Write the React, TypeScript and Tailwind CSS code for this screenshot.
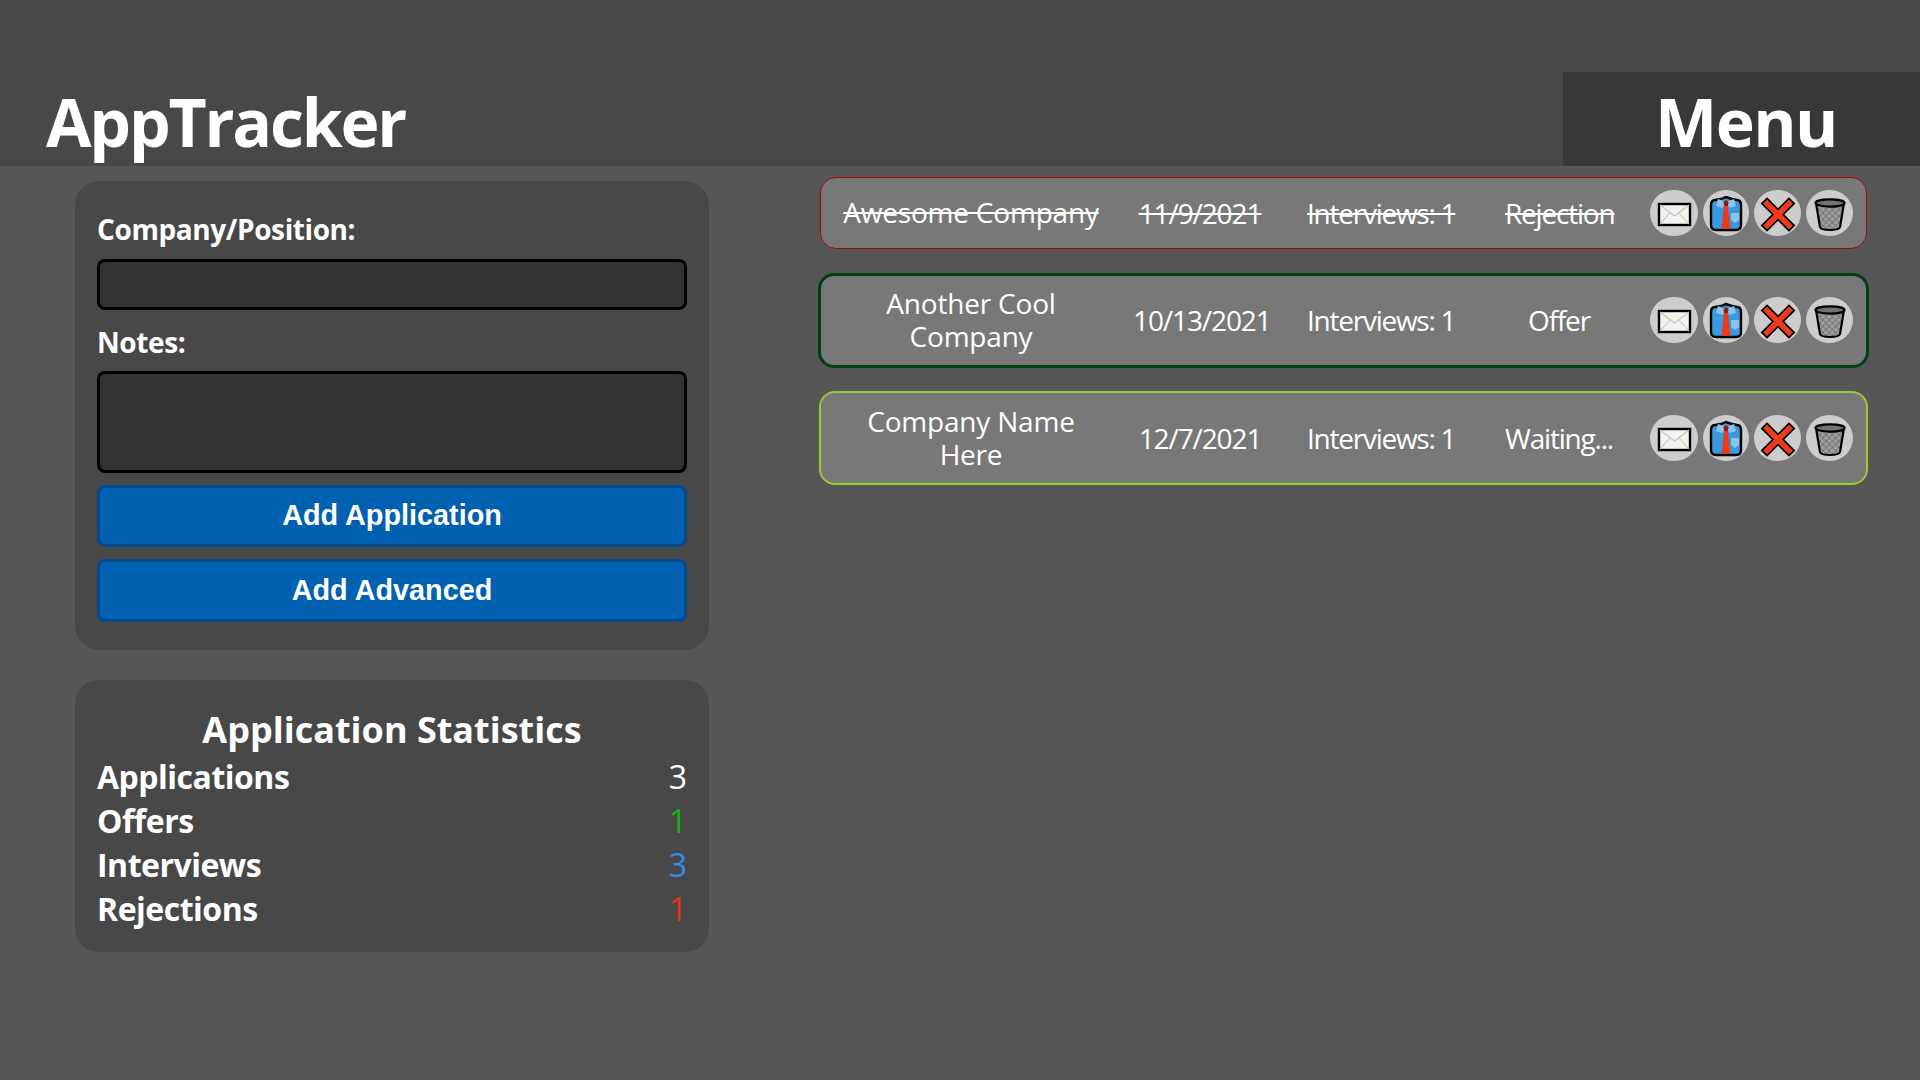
import React from "react";

const circle = "flex items-center justify-center rounded-full bg-[#cdcdcd] h-[46px]";

const MailIcon = () => (
  <svg width="46" height="46" viewBox="0 0 46 46">
    <rect x="8" y="14" width="31" height="21" fill="#f3f3ee" stroke="#000" strokeWidth="2.4" />
    <path d="M9 15 L23.5 26 L38 15 M9 34 L19 23 M38 34 L28 23" fill="none" stroke="#c4c4c0" strokeWidth="1.1" />
  </svg>
);

const ShirtIcon = () => (
  <svg width="46" height="46" viewBox="0 0 46 46">
    <path d="M12 10 L18 9 L23 7 L29 9 L34 10 Q38 10 38 15 L38 35 Q38 40 33 40 L13 40 Q8 40 8 35 L8 15 Q8 10 12 10 Z" fill="#3d97dc" stroke="#000" strokeWidth="2.4" />
    <path d="M15 9 L23 12 L31 9 L33 16 L27 18 L23 13 L19 18 L13 16 Z" fill="#8cc3ea" />
    <path d="M20.5 12 L25.5 12 L24.8 15 L27.5 39 L18.5 39 L21.2 15 Z" fill="#e93a1c" />
    <path d="M20.5 12 L23 10 L25.5 12 L24.8 16 L21.2 16 Z" fill="#9a1410" />
    <path d="M28 23 L36 23 L36 30 L32 33 L28 30 Z" fill="#8cc3ea" />
  </svg>
);

const CloseIcon = () => (
  <svg width="46" height="46" viewBox="0 0 46 46">
    <path d="M12 14 L34 36 M34 14 L12 36" transform="translate(0 -0.5)" fill="none" stroke="#000" strokeWidth="9" strokeLinecap="square" />
    <path d="M12 14 L34 36 M34 14 L12 36" transform="translate(0 -0.5)" fill="none" stroke="#ef3a1a" strokeWidth="5.5" strokeLinecap="square" />
  </svg>
);

const TrashIcon = () => (
  <svg width="46" height="46" viewBox="0 0 46 46">
    <defs>
      <pattern id="mesh" width="4.5" height="4.5" patternUnits="userSpaceOnUse" patternTransform="rotate(45)">
        <rect width="4.5" height="4.5" fill="#9a9ea2" />
        <path d="M0 0 H4.5 M0 0 V4.5" stroke="#55585b" strokeWidth="1" />
      </pattern>
    </defs>
    <path d="M9 13 L13 37 Q14 40 23 40 Q32 40 33 37 L37 13 Z" fill="url(#mesh)" stroke="#000" strokeWidth="2.2" />
    <ellipse cx="23" cy="13" rx="14.5" ry="3.6" fill="#6f7377" stroke="#000" strokeWidth="2.2" />
  </svg>
);

const Actions = () => (
  <div className="ml-[37px] flex gap-[5px]">
    <div className={`${circle} w-[48px]`}><MailIcon /></div>
    <div className={`${circle} w-[46px]`}><ShirtIcon /></div>
    <div className={`${circle} w-[47px]`}><CloseIcon /></div>
    <div className={`${circle} w-[47px]`}><TrashIcon /></div>
  </div>
);

const apps = [
  {
    company: "Awesome Company",
    date: "11/9/2021",
    status: "Rejection",
    box: "w-[1047px] border border-[#a30b0b] py-[12px] line-through",
  },
  {
    company: "Another Cool Company",
    date: "10/13/2021",
    status: "Offer",
    box: "w-[1051px] border-[3px] border-[#043f10] py-[11px]",
  },
  {
    company: "Company Name Here",
    date: "12/7/2021",
    status: "Waiting...",
    box: "w-[1049px] border-2 border-[#9ac92f] py-[11.5px]",
  },
];

const stats = [
  { label: "Applications", value: 3, color: "text-white" },
  { label: "Offers", value: 1, color: "text-[#14b414]" },
  { label: "Interviews", value: 3, color: "text-[#2f8fe6]" },
  { label: "Rejections", value: 1, color: "text-[#e8301c]" },
];

const fieldLabel = "block h-[38px] text-[28px] font-bold leading-[38px] tracking-[-0.4px] text-white";
const field = "block w-full rounded-lg border-[3px] border-black bg-[#333333]";
const button =
  "block w-full rounded-lg border-[3px] border-[#044a8c] bg-[#0061b1] font-['Liberation_Sans',Arial,sans-serif] text-[28.8px] font-bold text-white";

export default function App() {
  return (
    <div className="min-h-screen bg-[#565656] font-['Open_Sans',sans-serif] text-white">
      {/* HEADER */}
      <header className="flex h-[166px] items-end justify-between bg-[#484848]">
        <h1 className="ml-[46px] text-[66px] font-bold leading-[90px] tracking-[-2.2px]">AppTracker</h1>
        <div className="flex h-[94px] w-[357px] items-end bg-[#383838] pl-[92px]">
          <span className="text-[66px] font-bold leading-[90px] tracking-[-1.5px]">Menu</span>
        </div>
      </header>

      <main className="flex">
        {/* LEFT */}
        <div className="ml-[75px] mt-[15px] w-[634px]">
          <form className="rounded-3xl bg-[#484848] px-[22px] pb-[28px] pt-[29px]">
            <label className={fieldLabel}>Company/Position:</label>
            <input className={`${field} mt-[11px] h-[51px]`} />
            <label className={`${fieldLabel} mt-[13px]`}>Notes:</label>
            <textarea className={`${field} mt-[10px] h-[102px] resize-none`} />
            <button type="button" className={`${button} mt-[12px] h-[62px]`}>
              Add Application
            </button>
            <button type="button" className={`${button} mt-[12px] h-[63px]`}>
              Add Advanced
            </button>
          </form>

          <section className="mt-[30px] rounded-3xl bg-[#484848] px-[22px] pb-[21px] pt-[28px]">
            <h2 className="mb-[3px] text-center text-[36px] font-bold leading-[44px]">
              Application Statistics
            </h2>
            {stats.map((s) => (
              <div key={s.label} className="flex h-[44px] items-center justify-between text-[32px] leading-[44px]">
                <span className="font-bold tracking-[-0.5px]">{s.label}</span>
                <span className={`font-normal ${s.color}`}>{s.value}</span>
              </div>
            ))}
          </section>
        </div>

        {/* LIST */}
        <div className="ml-[109px] mt-[11px] flex w-[1051px] flex-col items-center gap-[23.5px]">
          {apps.map((a) => (
            <div
              key={a.company}
              className={`flex items-center rounded-[16px] bg-[#787878] px-[20px] text-center text-[28px] leading-[33.5px] tracking-[-0.2px] ${a.box}`}
            >
              <div className="w-[260px] shrink-0">{a.company}</div>
              <div className="ml-[32px] w-[134px] shrink-0 pt-[2px] tracking-[-1.1px]">{a.date}</div>
              <div className="ml-[40px] w-[146px] shrink-0 whitespace-nowrap pt-[2px] tracking-[-1.25px]">Interviews: 1</div>
              <div className="ml-[52px] w-[108px] shrink-0 pt-[2px] tracking-[-1.2px]">{a.status}</div>
              <Actions />
            </div>
          ))}
        </div>
      </main>
    </div>
  );
}
